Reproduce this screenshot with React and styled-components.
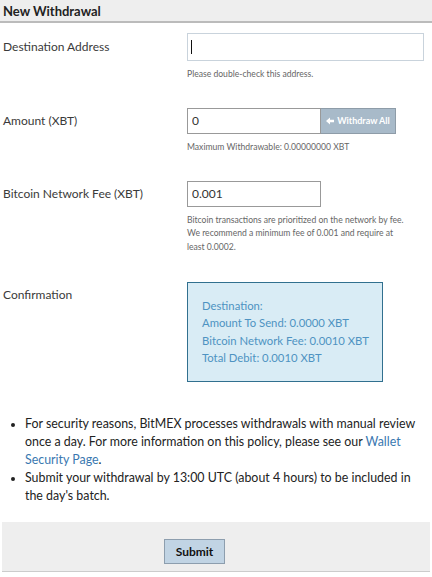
import React, { useState } from "react";
import styled, { createGlobalStyle } from "styled-components";

const GlobalStyle = createGlobalStyle`
  body {
    margin: 0;
    background: #fff;
    font-family: Lato, "Liberation Sans", sans-serif;
    color: #333;
  }
`;

const Page = styled.div`
  width: 432px;
`;

const Header = styled.div`
  height: 23px;
  line-height: 22px;
  padding-left: 3px;
  background: #eee;
  border-bottom: 2px solid #bbb;
  box-sizing: border-box;
  font-size: 13px;
  font-weight: 700;
  color: #222;
`;

const Form = styled.div`
  padding: 10px 8px 0 3px;
`;

const Row = styled.div`
  display: grid;
  grid-template-columns: 184px 1fr;
  margin-bottom: ${(p) => p.$gap || 28}px;
`;

const Label = styled.div`
  font-size: 12px;
  line-height: ${(p) => p.$lh || 26}px;
  color: #3a3a3a;
`;

const Field = styled.div`
  display: flex;
  flex-direction: column;
`;

const Group = styled.div`
  display: flex;
`;

const InputWrap = styled.div`
  position: relative;
  width: ${(p) => p.$w}px;
`;

const Caret = styled.span`
  position: absolute;
  left: 4px;
  top: 7px;
  width: 1px;
  height: 14px;
  background: #111;
  pointer-events: none;
`;

const Input = styled.input`
  box-sizing: border-box;
  width: ${(p) => p.$w}px;
  height: ${(p) => p.$h || 26}px;
  border: 1px solid ${(p) => p.$border || "#999"};
  padding: 0 4px;
  font-family: inherit;
  font-size: 12px;
  color: #333;
  outline: none;
  background: #fff;
  caret-color: transparent;
`;

const AddonButton = styled.button`
  box-sizing: border-box;
  width: 75px;
  height: 26px;
  border: 1px solid #8e9ca8;
  border-left: none;
  background: #a8bac9;
  color: #fff;
  font-family: inherit;
  font-size: 9px;
  font-weight: 700;
  display: flex;
  align-items: center;
  justify-content: center;
  gap: 3px;
  padding: 0;
`;

const Hint = styled.div`
  margin-top: 7px;
  font-size: 8.6px;
  line-height: 13.5px;
  color: #666;
`;

const ConfirmBox = styled.div`
  box-sizing: border-box;
  width: 196px;
  height: 100px;
  padding: 14px 14px 0;
  background: #d9ecf5;
  border: 1px solid #31708f;
  color: #4e93c2;
  font-size: 11.3px;
  line-height: 17.6px;
  white-space: nowrap;
`;

const Notes = styled.ul`
  margin: 0;
  padding: 0 8px 0 25px;
  font-size: 12.4px;
  line-height: 18px;
  color: #222;
  li::marker {
    font-size: 11px;
  }
`;

const Link = styled.a`
  color: #3a78b0;
  text-decoration: none;
`;

const Footer = styled.div`
  margin: 17px 2px 0;
  height: 50px;
  box-sizing: border-box;
  padding: 17px 0 0 162px;
  background: #eee;
  border-bottom: 1px solid #ccc;
`;

const SubmitButton = styled.button`
  box-sizing: border-box;
  width: 61px;
  height: 25px;
  background: #c1d4e4;
  border: 1px solid #8d9eae;
  font-family: inherit;
  font-size: 12px;
  font-weight: 700;
  color: #111;
  padding: 0;
`;

const ArrowLeft = () => (
  <svg width="8" height="8" viewBox="0 0 10 10" fill="#fff">
    <path d="M0 5 L5 0.5 L5 3.5 L10 3.5 L10 6.5 L5 6.5 L5 9.5 Z" />
  </svg>
);

export default function App() {
  const [address, setAddress] = useState("");
  const [amount, setAmount] = useState("0");
  const [fee, setFee] = useState("0.001");

  return (
    <Page>
      <GlobalStyle />
      <Header>New Withdrawal</Header>
      <Form>
        <Row $gap={26}>
          <Label $lh={27}>Destination Address</Label>
          <Field>
            <InputWrap $w={237}>
              <Input
                $w={237}
                $h={28}
                $border="#c9d3dc"
                value={address}
                autoFocus
                onChange={(e) => setAddress(e.target.value)}
              />
              {address === "" && <Caret />}
            </InputWrap>
            <Hint>Please double-check this address.</Hint>
          </Field>
        </Row>
        <Row $gap={26.5}>
          <Label>Amount (XBT)</Label>
          <Field>
            <Group>
              <Input
                $w={134}
                value={amount}
                onChange={(e) => setAmount(e.target.value)}
              />
              <AddonButton>
                <ArrowLeft />
                Withdraw All
              </AddonButton>
            </Group>
            <Hint>Maximum Withdrawable: 0.00000000 XBT</Hint>
          </Field>
        </Row>
        <Row $gap={27.5}>
          <Label>Bitcoin Network Fee (XBT)</Label>
          <Field>
            <Input
              $w={134}
              value={fee}
              onChange={(e) => setFee(e.target.value)}
            />
            <Hint>
              Bitcoin transactions are prioritized on the network by fee.
              <br />
              We recommend a minimum fee of 0.001 and require at
              <br />
              least 0.0002.
            </Hint>
          </Field>
        </Row>
        <Row $gap={33}>
          <Label>Confirmation</Label>
          <ConfirmBox>
            Destination:
            <br />
            Amount To Send: 0.0000 XBT
            <br />
            Bitcoin Network Fee: 0.0010 XBT
            <br />
            Total Debit: 0.0010 XBT
          </ConfirmBox>
        </Row>
      </Form>
      <Notes>
        <li>
          For security reasons, BitMEX processes withdrawals with manual review
          once a day. For more information on this policy, please see our{" "}
          <Link href="#">Wallet Security Page</Link>.
        </li>
        <li>
          Submit your withdrawal by 13:00 UTC (about 4 hours) to be included in
          the day's batch.
        </li>
      </Notes>
      <Footer>
        <SubmitButton>Submit</SubmitButton>
      </Footer>
    </Page>
  );
}
